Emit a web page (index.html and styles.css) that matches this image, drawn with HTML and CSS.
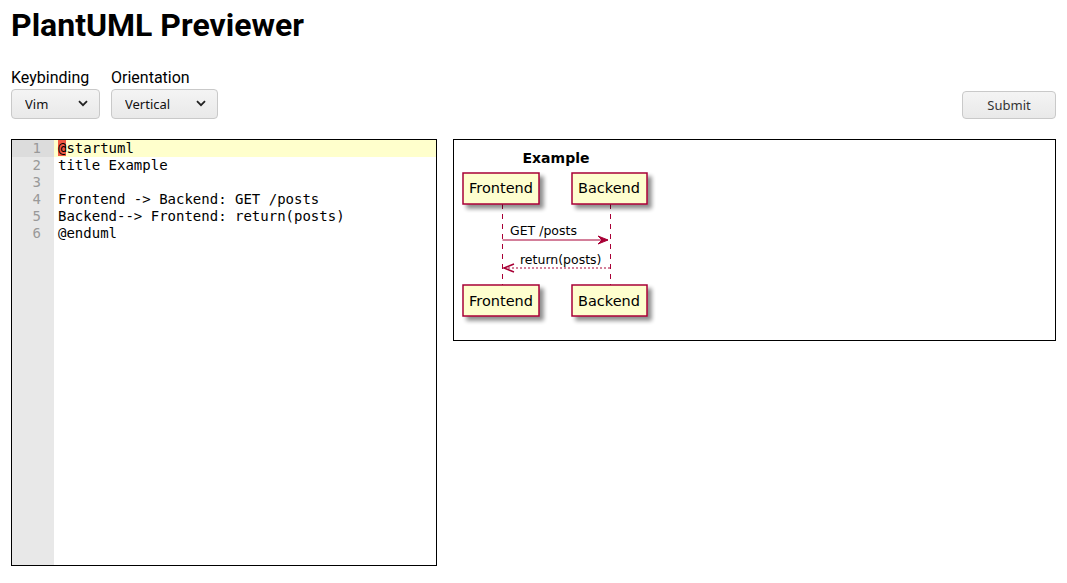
FILE: index.html
```html
<!DOCTYPE html>
<html>
<head>
<meta charset="utf-8">
<link rel="stylesheet" href="styles.css">
</head>
<body>
<h1 class="title">PlantUML Previewer</h1>
<div class="controls">
  <div class="options">
    <div class="field">
      <label class="label">Keybinding</label>
      <div class="select-wrap select-vim">
        <select class="select"><option>Vim</option></select>
        <svg class="chevron" width="10" height="7" viewBox="0 0 10 7"><path d="M1 1.2 L5 5.2 L9 1.2" fill="none" stroke="#222" stroke-width="1.8"/></svg>
      </div>
    </div>
    <div class="field">
      <label class="label">Orientation</label>
      <div class="select-wrap select-orient">
        <select class="select"><option>Vertical</option></select>
        <svg class="chevron" width="10" height="7" viewBox="0 0 10 7"><path d="M1 1.2 L5 5.2 L9 1.2" fill="none" stroke="#222" stroke-width="1.8"/></svg>
      </div>
    </div>
  </div>
  <button class="submit">Submit</button>
</div>
<div class="main">
  <div class="editor">
    <div class="gutter">
      <div class="gcell active">1</div>
      <div class="gcell">2</div>
      <div class="gcell">3</div>
      <div class="gcell">4</div>
      <div class="gcell">5</div>
      <div class="gcell">6</div>
    </div>
    <div class="code">
      <div class="line active"><span class="cursor">@</span>startuml</div>
      <div class="line">title Example</div>
      <div class="line"> </div>
      <div class="line">Frontend -&gt; Backend: GET /posts</div>
      <div class="line">Backend--&gt; Frontend: return(posts)</div>
      <div class="line">@enduml</div>
    </div>
  </div>
  <div class="preview">
    <svg class="diagram" width="210" height="200" viewBox="0 0 210 200">
      <defs>
        <filter id="sh" x="-20%" y="-20%" width="150%" height="160%">
          <feGaussianBlur in="SourceAlpha" stdDeviation="2"/>
          <feOffset dx="4" dy="4" result="b"/>
          <feComponentTransfer><feFuncA type="linear" slope="0.45"/></feComponentTransfer>
          <feMerge><feMergeNode/><feMergeNode in="SourceGraphic"/></feMerge>
        </filter>
      </defs>
      <text x="102" y="23" text-anchor="middle" font-family="DejaVu Sans, sans-serif" font-weight="bold" font-size="14">Example</text>
      <line x1="48.5" y1="64" x2="48.5" y2="145" stroke="#A80036" stroke-dasharray="5,5"/>
      <line x1="156.5" y1="64" x2="156.5" y2="145" stroke="#A80036" stroke-dasharray="5,5"/>
      <rect x="9" y="33" width="76" height="31" fill="#FEFECE" stroke="#A80036" stroke-width="1.5" filter="url(#sh)"/>
      <text x="15" y="53" font-family="DejaVu Sans, sans-serif" font-size="14.5">Frontend</text>
      <rect x="118" y="33" width="75" height="31" fill="#FEFECE" stroke="#A80036" stroke-width="1.5" filter="url(#sh)"/>
      <text x="124" y="53" font-family="DejaVu Sans, sans-serif" font-size="14.5">Backend</text>
      <rect x="9" y="145" width="76" height="31" fill="#FEFECE" stroke="#A80036" stroke-width="1.5" filter="url(#sh)"/>
      <text x="15" y="166" font-family="DejaVu Sans, sans-serif" font-size="14.5">Frontend</text>
      <rect x="118" y="145" width="75" height="31" fill="#FEFECE" stroke="#A80036" stroke-width="1.5" filter="url(#sh)"/>
      <text x="124" y="166" font-family="DejaVu Sans, sans-serif" font-size="14.5">Backend</text>
      <line x1="48.5" y1="100" x2="154" y2="100" stroke="#A80036"/>
      <polygon points="144,96 154,100 144,104 148,100" fill="#A80036" stroke="#A80036"/>
      <text x="56" y="95" font-family="DejaVu Sans, sans-serif" font-size="12.5">GET /posts</text>
      <line x1="50" y1="128" x2="156.5" y2="128" stroke="#A80036" stroke-dasharray="2,2"/>
      <polyline points="60,124 50,128 60,132" fill="none" stroke="#A80036" stroke-width="1.5"/>
      <text x="66" y="124" font-family="DejaVu Sans, sans-serif" font-size="12.5">return(posts)</text>
    </svg>
  </div>
</div>
</body>
</html>
```
FILE: styles.css
```css
html, body {
  margin: 0;
  padding: 0;
  background: #fff;
}
body {
  padding: 0 11px;
  font-family: Roboto, "Noto Sans", sans-serif;
  color: #000;
}
.title {
  margin: 0;
  padding-top: 5px;
  font-family: Roboto, sans-serif;
  font-weight: bold;
  font-size: 32px;
  line-height: 40px;
}
.controls {
  display: flex;
  justify-content: space-between;
  align-items: flex-end;
  margin-top: 23px;
}
.options {
  display: flex;
  gap: 11px;
}
.field {
  display: flex;
  flex-direction: column;
}
.label {
  font-size: 16px;
  line-height: 19px;
  margin-bottom: 2px;
}
.select-wrap {
  position: relative;
}
.select-vim { width: 89px; }
.select-orient { width: 107px; }
.select {
  appearance: none;
  -webkit-appearance: none;
  width: 100%;
  height: 30px;
  box-sizing: border-box;
  border: 1px solid #c9c9c9;
  border-radius: 4px;
  background: linear-gradient(#f4f4f4, #e9e9e9);
  font-family: "Noto Sans", "Open Sans", sans-serif;
  font-size: 13px;
  color: #111;
  padding: 0 0 0 13px;
  margin: 0;
}
.chevron {
  position: absolute;
  right: 12px;
  top: 11px;
  pointer-events: none;
}
.submit {
  width: 94px;
  height: 28px;
  box-sizing: border-box;
  border: 1px solid #c9c9c9;
  border-radius: 4px;
  background: linear-gradient(#f4f4f4, #e9e9e9);
  font-family: "Noto Sans", "Open Sans", sans-serif;
  font-size: 13px;
  color: #333;
  padding: 0;
  margin: 0;
}
.main {
  display: flex;
  gap: 16px;
  align-items: flex-start;
  margin-top: 20px;
}
.editor {
  width: 426px;
  height: 427px;
  box-sizing: border-box;
  border: 1px solid #000;
  display: flex;
  background: #fff;
}
.gutter {
  width: 42px;
  background: #e8e8e8;
  flex: none;
}
.gcell {
  height: 17px;
  line-height: 17px;
  text-align: right;
  padding-right: 13px;
  font-family: "DejaVu Sans Mono", monospace;
  font-size: 14px;
  color: #999;
}
.gcell.active {
  background: #dcdcdc;
}
.code {
  flex: 1;
}
.line {
  height: 17px;
  line-height: 17px;
  padding-left: 4px;
  font-family: "DejaVu Sans Mono", monospace;
  font-size: 14px;
  white-space: pre;
  color: #000;
}
.line.active {
  background: #ffffcc;
}
.cursor {
  background: #f05a44;
}
.preview {
  flex: 1;
  border: 1px solid #000;
  height: 202px;
  box-sizing: border-box;
}
.diagram {
  display: block;
}
```
